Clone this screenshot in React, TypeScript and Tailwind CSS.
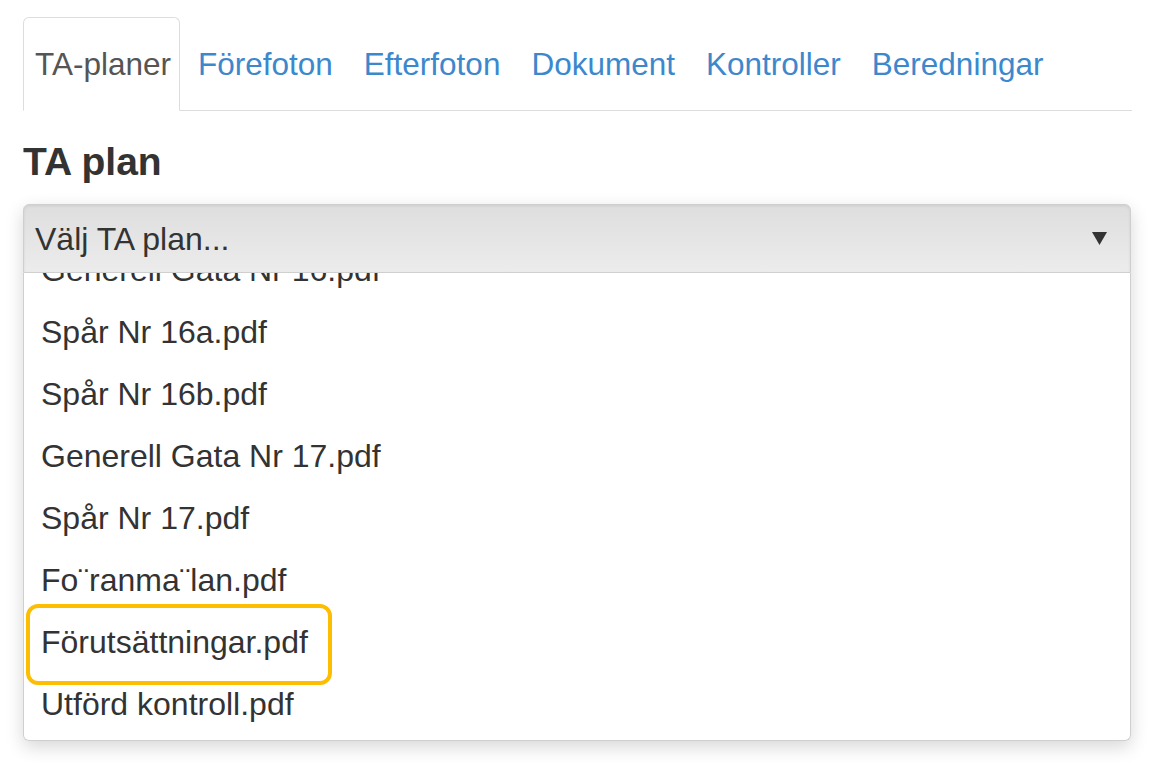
const tabs = ["TA-planer", "Förefoton", "Efterfoton", "Dokument", "Kontroller", "Beredningar"];

const files = [
  "Generell Gata Nr 16.pdf",
  "Spår Nr 16a.pdf",
  "Spår Nr 16b.pdf",
  "Generell Gata Nr 17.pdf",
  "Spår Nr 17.pdf",
  "Fo¨ranma¨lan.pdf",
  "Förutsättningar.pdf",
  "Utförd kontroll.pdf",
];

export default function App() {
  return (
    <div className="w-[1152px] h-[764px] overflow-hidden bg-white pl-[23px] pr-[20px] pt-[17px] font-['Liberation_Sans',Arial,sans-serif] text-[#333]">
      {/* Tabs */}
      <ul className="flex border-b border-[#ddd]">
        {tabs.map((t, i) => (
          <li
            key={t}
            className={
              i === 0
                ? "-mb-px mr-[3px] border border-[#ddd] border-b-white bg-white rounded-t-[6px] pl-[11px] pr-[8px] pt-[24px] pb-[24px] text-[31.5px] leading-[44px] text-[#555]"
                : "-mb-px mr-[5px] border border-transparent pl-[14px] pr-[10px] pt-[24px] pb-[24px] text-[31.5px] leading-[44px] text-[#3c88cd]"
            }
          >
            {t}
          </li>
        ))}
      </ul>

      <h3 className="mt-[29px] text-[39px] leading-[44px] font-bold text-[#333]">TA plan</h3>

      {/* Select with open list */}
      <div className="mt-[20px] w-[1108px] shadow-[0_6px_18px_rgba(0,0,0,0.16)] rounded-[6px]">
        <div className="flex h-[69px] items-center justify-between rounded-t-[6px] border border-[#cfcfcf] bg-gradient-to-b from-[#dedede] to-[#ececec] pl-[11px] pr-[23px] shadow-[inset_0_1px_3px_rgba(0,0,0,0.08)]">
          <span className="text-[32px] leading-[44px] text-[#333]">Välj TA plan...</span>
          <svg width="15" height="13" viewBox="0 0 15 13">
            <path d="M0 0 L15 0 L7.5 13 Z" fill="#333" />
          </svg>
        </div>
        <div className="h-[468px] overflow-hidden rounded-b-[6px] border border-t-0 border-[#cfcfcf] bg-white">
          <ul className="-mt-[34px]">
            {files.map((f) => (
              <li key={f} className="relative h-[62px] pl-[17px] text-[32px] leading-[62px] text-[#333]">
                {f}
                {f === "Förutsättningar.pdf" && (
                  <span className="absolute left-[2px] top-[-7px] h-[81px] w-[306px] rounded-[12px] border-[4px] border-[#fdbd00]" />
                )}
              </li>
            ))}
          </ul>
        </div>
      </div>
    </div>
  );
}
